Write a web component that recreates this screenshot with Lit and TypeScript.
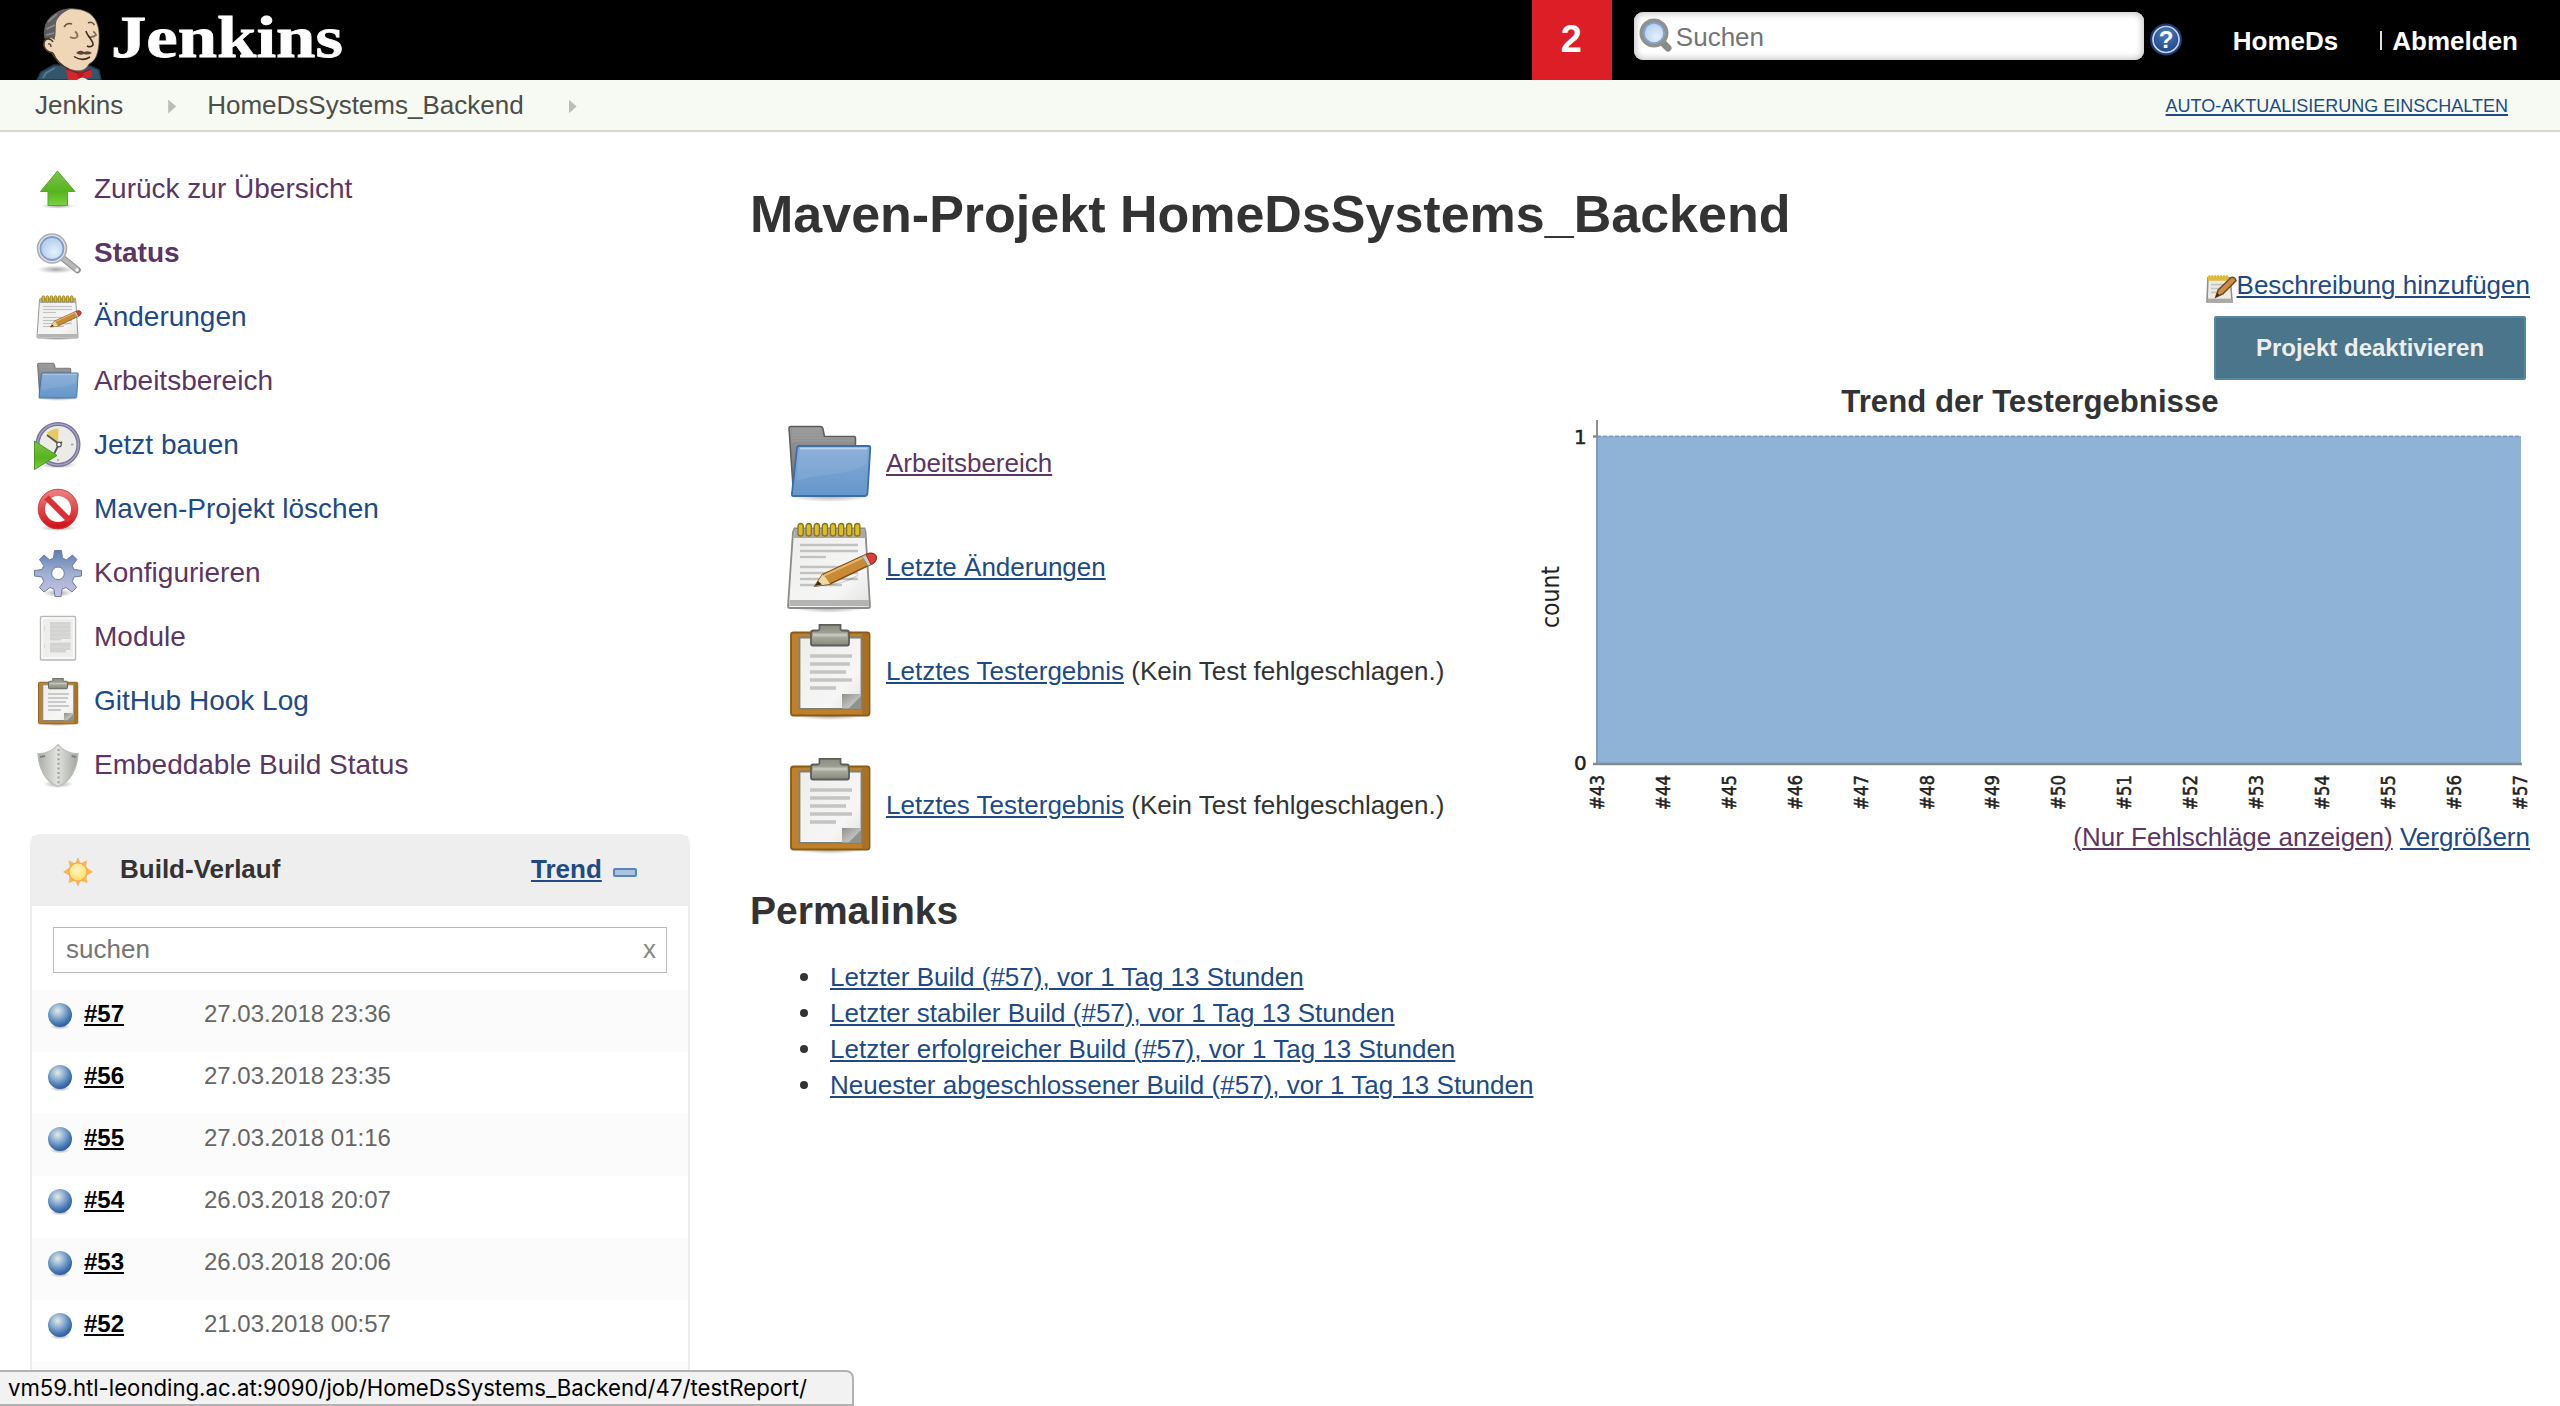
import { LitElement, html, svg, css } from "lit";
import { customElement } from "lit/decorators.js";

const shade = svg`<ellipse cx="24" cy="43" rx="19" ry="3.5" fill="url(#shadow)"/>`;

const folder = html`<svg class="fill" viewBox="0 0 96 96">
  <ellipse cx="48" cy="80" rx="43" ry="6" fill="url(#shadow)"/>
  <path d="M9 10.500H38.500Q40.500 10.500 41 13L42.500 20.500H72Q73.500 20.500 73.500 22.500V78H11.500L7 12.500Q7 10.500 9 10.500Z" fill="url(#gFolderBack)" stroke="#5c5c5c" stroke-width="1.500"/>
  <path d="M10 13H38M10 16H39M10 19H40M10 22H72M10 25H72" stroke="#a5a5a5" stroke-width="1" opacity=".7"/>
  <path d="M17 30H87Q88.500 30 88.300 32L85.500 77Q85 80 82.500 80H11Q9.500 80 10 77L15 32Q15.300 30 17 30Z" fill="url(#gFolder)" stroke="#3d6ea8" stroke-width="1.800"/>
  <path d="M18 32.500H85.500" stroke="#b9d3ee" stroke-width="1.800"/>
  <path d="M17 34H85.500L84 48C70 60 40 56 14.500 65Z" fill="#fff" opacity=".08"/>
</svg>`;

const notes = html`<svg class="fill" viewBox="0 0 96 96">
  <ellipse cx="47" cy="88" rx="36" ry="5" fill="url(#shadow)"/>
  <path d="M12.500 8.500H82.500L83.500 12L88 86Q88 88 86 88H8Q6 88 6 86L11 12Z" fill="url(#gPaper)" stroke="#8a8c87" stroke-width="1.800"/>
  <path d="M12.500 9.500H83L83.500 18H12Z" fill="#a9aaa5"/>
  <path d="M7.500 80H87L87.300 86H7.200Z" fill="#b4b5b2"/>
  ${[0, 1, 2, 3, 4, 5, 6, 7].map((i) => svg`<rect x=${16 + i * 8.1} y="3.500" width="5.200" height="12.500" rx="2.600" fill="#d9bd2c" stroke="#8b7414" stroke-width="1.300"/>`)}
  ${[[25, 76], [31, 76], [37, 44], [47, 76], [53, 76], [59, 76], [65, 60]].map(([y, x]) => svg`<path d="M18 ${y}H${x}" stroke="#c2c3c1" stroke-width="2.300"/>`)}
  <path d="M38 66C55 66 72 60 78 54L60 62Z" fill="#555" opacity=".25"/>
  <path d="M33 66L40.500 54.500L84 34.500Q91 31.500 94 36Q95.500 40 91 43.500L48 64Z" fill="#c98a35" stroke="#7a4f17" stroke-width="1.400"/>
  <path d="M42 55.500L82 37" stroke="#e8b468" stroke-width="2.400"/>
  <path d="M33 66L40.500 54.500L44 58L48 64Z" fill="#ecd9a4"/>
  <path d="M33 66L36 61L40 64.500Z" fill="#3a2c12"/>
  <path d="M80 36.500L84 34.500L90 44L86 46Z" fill="#c9c9c9" stroke="#888" stroke-width=".8"/>
  <path d="M84 34.500Q91 31.500 94 36Q95.500 40 91 43.500L89 44.500Z" fill="#e23b35" stroke="#8b3a2a" stroke-width="1"/>
</svg>`;

const clipboard = html`<svg class="fill" viewBox="0 0 96 96">
  <ellipse cx="48" cy="92" rx="34" ry="4" fill="url(#shadow)"/>
  <rect x="9" y="8.500" width="78.500" height="83" rx="2.500" fill="#bf802c" stroke="#8a5a14" stroke-width="1.800"/>
  <rect x="80" y="10" width="6" height="80" fill="#9c671f" opacity=".6"/>
  <path d="M17.500 13.500H79.500V85H17.500Z" fill="url(#gPaper)" stroke="#7d8072" stroke-width="1.800"/>
  ${[[32, 70], [40, 68], [48, 64], [56, 70], [64, 54]].map(([y, x]) => svg`<path d="M28 ${y}H${x}" stroke="#c4c5c3" stroke-width="3.600"/>`)}
  <path d="M60 70H79V73L67 84.500H60Z" fill="url(#gCurl)"/>
  <path d="M79 72V85H66Z" fill="#8f938b"/>
  <path d="M37.500 .8H58.500V5Q58.500 6.500 61 6.500H64.500Q67 6.500 67 9V19.500Q67 21.500 65 21.500H31Q29 21.500 29 19.500V9Q29 6.500 31.500 6.500H35Q37.500 6.500 37.500 5Z" fill="url(#gClip)" stroke="#5d5f57" stroke-width="1.800"/>
  <path d="M31 11H65" stroke="#c4c6ba" stroke-width="3"/>
</svg>`;

const arrowUp = html`<svg class="fill" viewBox="0 0 48 48">
  <ellipse cx="24" cy="40" rx="17" ry="2.800" fill="url(#shadow)"/>
  <path d="M23.500 5L41 25.500H33.500V39.500H14V25.500H6.500Z" fill="url(#gGreen)" stroke="#5aa432" stroke-width="1"/>
</svg>`;

const magnifier = html`<svg class="fill" viewBox="0 0 48 48">
  <ellipse cx="22" cy="39.500" rx="19" ry="4" fill="url(#shadow)"/>
  <path d="M28 27.500L43.500 40" stroke="#8a8a8a" stroke-width="6.500" stroke-linecap="round"/>
  <path d="M28 27.500L43 39.500" stroke="#b8b8b8" stroke-width="4.500" stroke-linecap="round"/>
  <circle cx="18" cy="18.500" r="14.500" fill="#e2e2e2" stroke="#adadad" stroke-width="1.600"/>
  <circle cx="18" cy="18.500" r="11.500" fill="url(#gLens)" stroke="#7d9fcd" stroke-width="1.800"/>
  <circle cx="43" cy="40" r="1.800" fill="#f4f4f4"/>
</svg>`;

const clock = html`<svg class="fill" viewBox="0 0 48 48">
  ${shade}
  <circle cx="24" cy="22.500" r="20.500" fill="#ecebe8" stroke="#77749b" stroke-width="4"/>
  <circle cx="24" cy="22.500" r="20.500" fill="none" stroke="#a5a3c2" stroke-width="1.400"/>
  <path d="M24 22L13 11Q18 6.500 24.500 6.500Z" fill="#e8c95c"/>
  <path d="M13 13L25 22M25 22L19 34M25 22L28 20" stroke="#55564f" stroke-width="1.800" fill="none"/>
  <circle cx="25" cy="22.500" r="2.300" fill="#fff" stroke="#555" stroke-width="1.200"/>
  <path d="M37 22.500H39.500M24 37V39" stroke="#9a9a9a" stroke-width="1.400"/>
  <path d="M.5 19L23 33.500L.5 47.500Z" fill="url(#gGreen)" stroke="#4b9a1f" stroke-width="1"/>
</svg>`;

const forbidden = html`<svg class="fill" viewBox="0 0 48 48">
  <ellipse cx="24" cy="42" rx="19" ry="3" fill="url(#shadow)"/>
  <circle cx="24" cy="23" r="16.500" fill="#fff" stroke="url(#gRed)" stroke-width="7"/>
  <path d="M12.500 11.500L35.500 34.500" stroke="#dc2f35" stroke-width="6"/>
  <circle cx="24" cy="23" r="19.800" fill="none" stroke="#d23c3c" stroke-width=".8"/>
</svg>`;

const gear = html`<svg class="fill" viewBox="0 0 48 48">
  <ellipse cx="24" cy="43" rx="15" ry="4" fill="url(#shadow)"/>
  <g fill="url(#gGear)" stroke="#6c7ca6" stroke-width="1">
    <path fill-rule="evenodd" d="M20.500 .5H27.500L28.500 8.200L32.500 9.800L38.500 5L43 9.500L38.300 15.500L40 19.500L47.500 20.500V26L40 27L38.300 31.500L42.500 37.500L38 42L32 37.500L28 39.200L27 46.500H21L20 39.200L16 37.500L10 42L5.500 37.500L9.700 31.500L8 27L.5 26V20.500L8 19.500L9.700 15.500L5.500 9.500L10 5L15.500 9.800L19.500 8.200ZM24 17A6.300 6.300 0 1 0 24 29.600A6.300 6.300 0 1 0 24 17Z"/>
  </g>
</svg>`;

const page = html`<svg class="fill" viewBox="0 0 48 48">
  <rect x="6.500" y="2.500" width="35" height="43.500" rx="1" fill="#eeeeed" stroke="#b7b9b5" stroke-width="1.400"/>
  <rect x="8" y="4" width="32" height="40" fill="none" stroke="#fff" stroke-width="1.200"/>
  <path d="M16 8H36.500V25H27V26.500H16ZM16 28.500H36.500V36H32V38.500H16Z" fill="#d3d4d2"/>
  <path d="M16 11H36M16 15H36M16 19H36M16 23H36M16 33H36" stroke="#dadad9" stroke-width="1"/>
  <path d="M10.500 12V17M10.500 30V34" stroke="#d8d8d8" stroke-width="1"/>
</svg>`;

const shield = html`<svg class="fill" viewBox="0 0 48 48">
  <ellipse cx="24" cy="42" rx="15" ry="4" fill="url(#shadow)"/>
  <path d="M24 2.500C28 8 36 12 44 11.500C43.500 27 36 40 24 44.500C12 40 4.500 27 4 11.500C12 12 20 8 24 2.500Z" fill="url(#gShield)" stroke="#b9bcb6" stroke-width="1.200"/>
  <path d="M24.500 7V42" stroke="#a3a69f" stroke-width="2.400" stroke-dasharray="2 2.600"/>
  <path d="M6 15L11 14M37.500 14L42 15" stroke="#7f827c" stroke-width="2"/>
</svg>`;

const ball = html`<svg class="ball" viewBox="0 0 26 28">
  <ellipse cx="13" cy="24.500" rx="10" ry="3" fill="url(#shadow)"/>
  <circle cx="13" cy="13" r="12" fill="url(#gBall)"/>
</svg>`;

const sun = html`<svg class="sun" viewBox="0 0 28 28">
  <path d="M14 0L16.500 6L22.500 3L21.500 9.500L28 14L21.500 17.500L23 24.500L16.500 22L14 28L11.500 22L5 24.500L6.500 17.500L0 14L6.500 9.500L5 3L11.500 6Z" fill="#f9b45c"/>
  <circle cx="14" cy="14" r="8.500" fill="url(#gSun)" stroke="#f5a94c" stroke-width="1.200"/>
</svg>`;

const editNote = html`<svg class="edit" viewBox="0 0 32 32">
  <path d="M2 5H25L27 30H1Z" fill="#ecebe8" stroke="#8e8e8a" stroke-width="1.600"/>
  <path d="M1.500 26.500H26.500V30H1.500Z" fill="#aaa9a4"/>
  <path d="M5 12H21M5 16H20M5 20H17" stroke="#c4c4c0" stroke-width="1.600"/>
  <path d="M2 3.500Q3.500 .5 5 3.500Q6.500 .5 8 3.500Q9.500 .5 11 3.500Q12.500 .5 14 3.500Q15.500 .5 17 3.500Q18.500 .5 20 3.500Q21.500 .5 23 3.500V8H2Z" fill="#e3b93a"/>
  <path d="M10 25L12.500 17.500L26 4.500Q30 4 31 8L17.500 21.500Z" fill="#c98d45" stroke="#6e4a1d" stroke-width="1.400"/>
  <path d="M10 25L11.500 20.500L14 23Z" fill="#3b2a14"/>
</svg>`;

const logo = html`<svg class="logo" viewBox="0 0 380 80">
  <defs>
    <radialGradient id="shadow"><stop offset="0" stop-color="#000" stop-opacity=".35"/><stop offset="1" stop-color="#000" stop-opacity="0"/></radialGradient>
    <linearGradient id="gFolderBack" x1="0" y1="0" x2="0" y2="1"><stop offset="0" stop-color="#9a9a9a"/><stop offset="1" stop-color="#6b6b6b"/></linearGradient>
    <linearGradient id="gFolder" x1="0" y1="0" x2="0" y2="1"><stop offset="0" stop-color="#84abd6"/><stop offset="1" stop-color="#6596cb"/></linearGradient>
    <linearGradient id="gPaper" x1="0" y1="0" x2="1" y2="1"><stop offset="0" stop-color="#ededec"/><stop offset=".7" stop-color="#f6f6f6"/><stop offset="1" stop-color="#e2e2e1"/></linearGradient>
    <linearGradient id="gCurl" x1="0" y1="0" x2="1" y2="1"><stop offset="0" stop-color="#8e918a"/><stop offset="1" stop-color="#e0e0de"/></linearGradient>
    <linearGradient id="gClip" x1="0" y1="0" x2="0" y2="1"><stop offset="0" stop-color="#8b8d83"/><stop offset=".6" stop-color="#a7a99d"/><stop offset="1" stop-color="#85877c"/></linearGradient>
    <linearGradient id="gGreen" x1="0" y1="0" x2="0" y2="1"><stop offset="0" stop-color="#7cc34d"/><stop offset=".6" stop-color="#56b41c"/><stop offset="1" stop-color="#7bd23f"/></linearGradient>
    <radialGradient id="gLens" cx=".6" cy=".65" r=".65"><stop offset="0" stop-color="#e6f0fa"/><stop offset="1" stop-color="#b0cbeb"/></radialGradient>
    <linearGradient id="gRed" x1="0" y1="0" x2="0" y2="1"><stop offset="0" stop-color="#ea7a7a"/><stop offset="1" stop-color="#d4151c"/></linearGradient>
    <linearGradient id="gGear" x1="0" y1="0" x2="0" y2="1"><stop offset="0" stop-color="#5f7eb0"/><stop offset=".5" stop-color="#a0afd2"/><stop offset="1" stop-color="#c8c2e2"/></linearGradient>
    <linearGradient id="gShield" x1="0" y1="0" x2="1" y2="0"><stop offset="0" stop-color="#a9ada6"/><stop offset=".48" stop-color="#e2e4df"/><stop offset="1" stop-color="#a2a59e"/></linearGradient>
    <radialGradient id="gBall" cx=".4" cy=".32" r=".7"><stop offset="0" stop-color="#e4ecdf"/><stop offset=".35" stop-color="#9ab8d6"/><stop offset=".75" stop-color="#4a7ab5"/><stop offset="1" stop-color="#2d5a9c"/></radialGradient>
    <radialGradient id="gSun" cx=".45" cy=".4" r=".6"><stop offset="0" stop-color="#fff8d0"/><stop offset="1" stop-color="#fbdc58"/></radialGradient>
    <radialGradient id="gHelp" cx=".5" cy=".3" r=".7"><stop offset="0" stop-color="#4d7bbd"/><stop offset="1" stop-color="#1d4482"/></radialGradient>
  </defs>
  <path d="M37 80L41 72L54 65L90 66L99 70L101 80Z" fill="#33566b" stroke="#1f3a49" stroke-width="1.500"/>
  <path d="M43 78L46 73L55 68" stroke="#4d7d97" stroke-width="2" fill="none"/>
  <path d="M55 15C61 9 68 8.500 75 9C84 9.500 92 13 96 21C100 30 99 36 99 43C98 52 97 60 89 64C85 72 78 72 69 69C61 66 55 59 52 53C47 52 43 48 44 43C44 39 47 38 50 39C49 28 50 20 55 15Z" fill="#efd6b6" stroke="#6b5a4a" stroke-width=".8"/>
  <path d="M44.500 39C42.500 28 46 19 54 14C58 10.500 64 8.500 70 9C62 13 57.500 17 56 23C55.500 29 56 34 54.500 40C51 37 48 37.500 44.500 39Z" fill="#5f5d60"/>
  <path d="M48 22L57 14M46.500 29L55 25M46.500 35L54 33" stroke="#8f8d90" stroke-width="1.600"/>
  <path d="M53 53C47 52 43 48 44 43C45 38 51 38 53 42M48 44Q51 43 51 47M53 53C56 60 62 66 69 69" fill="none" stroke="#4a3526" stroke-width="1.300"/>
  <path d="M64 27Q67 22 72 24M88 23Q92 21 94.500 25" fill="none" stroke="#6b4f3c" stroke-width="1.500"/>
  <path d="M70 37Q75 39.500 77.500 36.500Q77.500 33 75 31.500M88 36Q92 38.500 96 35Q95 32 93 31.500" fill="none" stroke="#84705c" stroke-width="1.800"/>
  <path d="M86 31C87 36 94 41 93 45Q91 48 87 46" fill="none" stroke="#3c2a20" stroke-width="1.500"/>
  <path d="M76 53Q80 49 84 52Q89 50 92 53Q88 55.500 84 54Q80 56 76 53Z" fill="#5c4336"/>
  <path d="M74 56.500Q82 62 90 57" fill="none" stroke="#3c2a20" stroke-width="1.500"/>
  <path d="M66 69L78 73L80 80H68Z" fill="#d8242c"/>
  <path d="M91 69L82 73L81 79L92 77Z" fill="#d8242c"/>
  <path d="M66 69L78 73L79 79M91 69L82 73" fill="none" stroke="#8d151b" stroke-width="1.200"/>
  <circle cx="80.500" cy="75" r="3" fill="#b8181f"/>
  <path d="M77 80Q82 75 88 80Z" fill="#e6e6e6"/>
  <text x="111" y="57" class="brand" textLength="232" lengthAdjust="spacingAndGlyphs">Jenkins</text>
</svg>`;

type Task = [unknown, string, string];
const tasks: Task[] = [
  [arrowUp, "Zurück zur Übersicht", "visited"],
  [magnifier, "Status", "visited strong"],
  [notes, "Änderungen", ""],
  [folder, "Arbeitsbereich", "visited"],
  [clock, "Jetzt bauen", ""],
  [forbidden, "Maven-Projekt löschen", ""],
  [gear, "Konfigurieren", "visited"],
  [page, "Module", "visited"],
  [clipboard, "GitHub Hook Log", ""],
  [shield, "Embeddable Build Status", "visited"],
];

const builds: [string, string][] = [
  ["#57", "27.03.2018 23:36"],
  ["#56", "27.03.2018 23:35"],
  ["#55", "27.03.2018 01:16"],
  ["#54", "26.03.2018 20:07"],
  ["#53", "26.03.2018 20:06"],
  ["#52", "21.03.2018 00:57"],
];

const permalinks = [
  "Letzter Build (#57), vor 1 Tag 13 Stunden",
  "Letzter stabiler Build (#57), vor 1 Tag 13 Stunden",
  "Letzter erfolgreicher Build (#57), vor 1 Tag 13 Stunden",
  "Neuester abgeschlossener Build (#57), vor 1 Tag 13 Stunden",
];

const chartBuilds = Array.from({ length: 15 }, (_, i) => 43 + i);

@customElement("app-root")
export class AppRoot extends LitElement {
  static styles = css`
    :host {
      display: block;
      position: relative;
      height: 1406px;
      overflow: hidden;
      background: #fff;
      color: #333;
      font: 26px/36px "Liberation Sans", Arial, sans-serif;
      white-space: nowrap;
    }
    svg { display: block; flex: none; }
    .fill { width: 100%; height: 100%; }
    .link {
      color: #204a87;
      text-decoration: underline;
      text-decoration-thickness: 2px;
      text-underline-offset: 2px;
    }
    .visited { color: #5c3566; }

    .header { display: flex; height: 80px; background: #000; color: #fff; }
    .logo { width: 380px; height: 80px; margin-right: auto; }
    .brand { font: bold 60px "Liberation Serif", serif; fill: #fff; stroke: #fff; stroke-width: .8px; }
    .alerts {
      width: 80px; box-sizing: border-box; padding-right: 1px;
      background: #dd1e26; text-align: center;
      font-weight: bold; font-size: 38px; line-height: 78px;
    }
    .search {
      display: flex; box-sizing: border-box; width: 510px; height: 48px;
      margin: 12px 0 0 22px; padding: 2px 0 0 5px;
      border-radius: 9px; background: #fff; color: #757575;
      box-shadow: inset 0 0 6px 2px #c8c8c8; line-height: 46px;
    }
    .search-icon { width: 34px; height: 34px; margin: 4px 3px 0 0; }
    .help { width: 34px; height: 34px; margin: 22px 0 0 5px; }
    .help-mark { font: bold 24px "Liberation Sans", sans-serif; fill: #fff; }
    .user { margin-left: 50px; font-weight: bold; line-height: 82px; }
    .divider { width: 2px; height: 19px; margin: 31px 0 0 42px; background: #ddd; }
    .logout { margin: 0 42px 0 10px; font-weight: bold; line-height: 82px; }

    .crumbs {
      display: flex; align-items: center; height: 50px; padding: 0 52px 0 35px;
      background: #f6faf2; border-bottom: 2px solid #d3d7cf; color: #4d4d4a;
    }
    .sep { width: 8px; height: 14px; margin: 3px 31px 0 45px; background: #babdb6; clip-path: polygon(0 0, 100% 50%, 0 100%); }
    .auto { margin-left: auto; padding-top: 1px; font-size: 18px; }

    .body { display: flex; }
    .side { flex: none; width: 660px; padding: 26px 0 0 30px; }
    .task { display: flex; height: 64px; padding-left: 4px; font-size: 28px; line-height: 62px; color: #204a87; }
    .task.visited { color: #5c3566; }
    .task.strong { font-weight: bold; }
    .task-icon { width: 48px; height: 48px; margin: 8px 12px 0 0; }

    .pane { margin-top: 36px; border: 2px solid #eee; border-radius: 10px 10px 0 0; height: 700px; }
    .pane-head { display: flex; height: 70px; background: #eee; font-weight: bold; line-height: 66px; padding-left: 31px; }
    .sun { width: 30px; height: 30px; margin: 21px 27px 0 0; }
    .pane-title { flex: none; width: 411px; }
    .minus { width: 20px; height: 5px; margin: 32px 0 0 11px; border: 2px solid #5b83b8; border-radius: 2px; background: #a9c3e3; }
    .filter {
      display: flex; justify-content: space-between; box-sizing: border-box;
      height: 46px; margin: 21px 21px 17px; padding: 0 10px 0 12px;
      border: 1px solid #bbb; color: #757575; line-height: 42px;
    }
    .clear { color: #888; }
    .build { display: flex; height: 62px; padding-left: 15px; font-size: 24px; line-height: 48px; color: #666; }
    .build:nth-child(odd) { background: #fbfbfb; }
    .ball { width: 26px; height: 28px; margin: 12px 11px 0 0; }
    .num { width: 120px; }
    .num .link { color: #000; font-weight: bold; }

    .main { width: 1780px; padding: 50px 0 0 60px; }
    .title { margin: 0; font-size: 52px; line-height: 64px; }
    .columns { display: grid; grid-template-columns: 780px 1000px; }
    .left { padding-top: 170px; }
    .entry { display: flex; height: 96px; margin: 0 0 8px 32px; line-height: 94px; }
    .entry.late { margin-top: 38px; }
    .entry-icon { width: 96px; height: 96px; margin-right: 8px; }
    .sub { margin: 34px 0 0; font-size: 39px; line-height: 46px; }
    .entries { height: 438px; }
    .perma { margin: 25px 0 0; padding: 0 0 0 50px; list-style: none; }
    .perma-item { display: flex; align-items: center; gap: 22px; height: 36px; }
    .perma-item::before { content: ""; flex: none; width: 8px; height: 8px; border-radius: 50%; background: #333; }

    .right { display: flex; flex-direction: column; align-items: flex-end; padding-top: 21px; }
    .describe { display: flex; }
    .edit { width: 31px; height: 31px; margin-top: 6px; }
    .disable {
      box-sizing: border-box; width: 312px; height: 64px; margin: 12px 4px 0 0;
      border: 2px solid #5788a1; border-radius: 2px; background: #4b758b;
      color: #eee; font: bold 24px/58px "Liberation Sans", sans-serif; text-align: center;
    }
    .chart-title { align-self: stretch; margin-top: 4px; text-align: center; font-weight: bold; font-size: 31.2px; }
    .chart { width: 1000px; height: 400px; margin-top: -1px; overflow: visible; }
    .axis { font: 20px "DejaVu Sans", sans-serif; fill: #222; stroke: #222; stroke-width: .5px; }
    .axis.caption { font-size: 24px; stroke-width: 0; }

    .status {
      position: absolute; left: -2px; top: 1370px; box-sizing: border-box;
      width: 856px; height: 36px; padding-left: 8px;
      border: 2px solid #b2b2b2; border-radius: 0 8px 0 0; background: #f2f2f2;
    }
    .status-text { width: 830px; height: 32px; }
    .status-label { font: 22.5px Inter, sans-serif; fill: #000; }
  `;

  private chart() {
    return html`<svg class="chart" viewBox="1530 419 1000 400">
      <rect x="1597" y="436" width="924" height="328" fill="#8fb2d7"/>
      <path d="M1597 436.500H2521" stroke="#7f9dc0" stroke-width="2" stroke-dasharray="4 2"/>
      <path d="M1597 420V765" stroke="#8f8f8f" stroke-width="2"/>
      <path d="M1597 437V763" stroke="#7e9cc0" stroke-width="2"/>
      <path d="M1593 436.500H1598M1593 764H2522" stroke="#858a90" stroke-width="2.500"/>
      <text class="axis" x="1574" y="444">1</text>
      <text class="axis" x="1574" y="770">0</text>
      <text class="axis caption" transform="translate(1559 628) rotate(-90)" textLength="62" lengthAdjust="spacingAndGlyphs">count</text>
      ${chartBuilds.map((n, i) => svg`<text class="axis" transform="translate(${1604 + i * 65.9} 810) rotate(-90)" textLength="35" lengthAdjust="spacingAndGlyphs">#${n}</text>`)}
    </svg>`;
  }

  render() {
    return html`
      <div class="header">
        ${logo}
        <div class="alerts">2</div>
        <div class="search">
          <svg class="search-icon" viewBox="0 0 34 34">
            <path d="M23 24L29 30" stroke="#8a8a86" stroke-width="7" stroke-linecap="round"/>
            <circle cx="15" cy="15" r="12.500" fill="url(#gLens)" stroke="#90908c" stroke-width="4"/>
            <circle cx="15" cy="15" r="10" fill="none" stroke="#7ba3d8" stroke-width="1.500"/>
          </svg>
          <span>Suchen</span>
        </div>
        <svg class="help" viewBox="0 0 34 34">
          <circle cx="17" cy="17.500" r="14" fill="url(#gHelp)" stroke="#1c3c72" stroke-width="4"/>
          <circle cx="17" cy="17.500" r="13" fill="none" stroke="#c5d3e8" stroke-width="1.700"/>
          <text class="help-mark" x="17" y="26" text-anchor="middle">?</text>
        </svg>
        <div class="user">HomeDs</div>
        <div class="divider"></div>
        <div class="logout">Abmelden</div>
      </div>
      <div class="crumbs">
        <span>Jenkins</span><i class="sep"></i>
        <span>HomeDsSystems_Backend</span><i class="sep"></i>
        <a class="link auto">AUTO-AKTUALISIERUNG EINSCHALTEN</a>
      </div>
      <div class="body">
        <div class="side">
          ${tasks.map(([icon, label, cls]) => html`<div class="task ${cls}"><div class="task-icon">${icon}</div>${label}</div>`)}
          <div class="pane">
            <div class="pane-head">
              ${sun}<span class="pane-title">Build-Verlauf</span>
              <a class="link">Trend</a><span class="minus"></span>
            </div>
            <div class="filter"><span>suchen</span><span class="clear">x</span></div>
            <div class="builds">
              ${builds.map(([n, date]) => html`<div class="build">${ball}<span class="num"><a class="link">${n}</a></span>${date}</div>`)}
              <div class="build"></div>
            </div>
          </div>
        </div>
        <div class="main">
          <h1 class="title">Maven-Projekt HomeDsSystems_Backend</h1>
          <div class="columns">
            <div class="left">
              <div class="entries">
                <div class="entry"><div class="entry-icon">${folder}</div><a class="link visited">Arbeitsbereich</a></div>
                <div class="entry"><div class="entry-icon">${notes}</div><a class="link">Letzte Änderungen</a></div>
                <div class="entry"><div class="entry-icon">${clipboard}</div><span><a class="link">Letztes Testergebnis</a> (Kein Test fehlgeschlagen.)</span></div>
                <div class="entry late"><div class="entry-icon">${clipboard}</div><span><a class="link">Letztes Testergebnis</a> (Kein Test fehlgeschlagen.)</span></div>
              </div>
              <h2 class="sub">Permalinks</h2>
              <ul class="perma">
                ${permalinks.map((p) => html`<li class="perma-item"><a class="link">${p}</a></li>`)}
              </ul>
            </div>
            <div class="right">
              <div class="describe">${editNote}<a class="link">Beschreibung hinzufügen</a></div>
              <button class="disable">Projekt deaktivieren</button>
              <div class="chart-title">Trend der Testergebnisse</div>
              ${this.chart()}
              <div><a class="link visited">(Nur Fehlschläge anzeigen)</a> <a class="link">Vergrößern</a></div>
            </div>
          </div>
        </div>
      </div>
      <div class="status">
        <svg class="status-text" viewBox="0 0 830 32">
          <text class="status-label" x="0" y="24" textLength="799" lengthAdjust="spacingAndGlyphs">vm59.htl-leonding.ac.at:9090/job/HomeDsSystems_Backend/47/testReport/</text>
        </svg>
      </div>
    `;
  }
}
